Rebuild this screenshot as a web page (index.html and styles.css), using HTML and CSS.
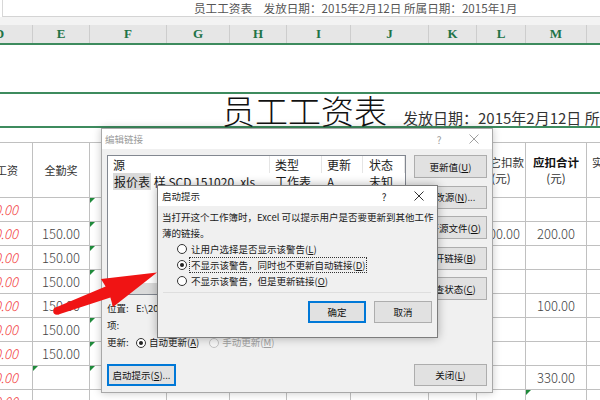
FILE: index.html
```html
<!DOCTYPE html>
<html lang="zh-CN">
<head>
    <meta charset="UTF-8">
    <title>员工工资表 - 编辑链接</title>
    <link rel="stylesheet" href="styles.css">
</head>
<body>
    <div class="topbar">员工工资表　发放日期：2015年2月12日 所属日期：2015年1月</div>
    <div class="band"></div>

    <div class="colheads">
        <div class="ch c-d">D</div><div class="ch c-e">E</div><div class="ch c-f">F</div><div class="ch c-g">G</div><div class="ch c-h">H</div><div class="ch c-i">I</div><div class="ch c-j">J</div><div class="ch c-k">K</div><div class="ch c-l">L</div><div class="ch c-m">M</div><div class="ch c-n">N</div>
    </div>

    <div class="blank-row"></div>
    <div class="title-row"><span class="big">员工工资表</span><span class="sub">发放日期：2015年2月12日 所属日期：2015年1月</span></div>
    <div class="spacer-row"></div>

    <!-- header row -->
    <div class="row head">
        <div class="cell c-d right hd">应发工资</div>
        <div class="cell c-e hd">全勤奖</div>
        <div class="cell c-f"></div><div class="cell c-g"></div><div class="cell c-h"></div><div class="cell c-i"></div><div class="cell c-j"></div><div class="cell c-k"></div>
        <div class="cell c-l hd two"><span class="stack">其它扣款<br>(元)</span></div>
        <div class="cell c-m hd two"><span class="stack"><b>应扣合计</b><br>(元)</span></div>
        <div class="cell c-n hd two left"><span class="stack">实发合计<br>(元)</span></div>
    </div>

    <!-- data rows -->
    <div class="row">
        <div class="cell c-d right red">3000.00</div><div class="cell c-e"></div><div class="cell c-f flag"></div><div class="cell c-g"></div><div class="cell c-h"></div><div class="cell c-i"></div><div class="cell c-j"></div><div class="cell c-k"></div><div class="cell c-l"></div><div class="cell c-m"></div><div class="cell c-n"></div>
    </div>
    <div class="row">
        <div class="cell c-d right red">3000.00</div><div class="cell c-e num">150.00</div><div class="cell c-f flag"></div><div class="cell c-g"></div><div class="cell c-h"></div><div class="cell c-i"></div><div class="cell c-j"></div><div class="cell c-k"></div><div class="cell c-l num">100.00</div><div class="cell c-m num">200.00</div><div class="cell c-n"></div>
    </div>
    <div class="row">
        <div class="cell c-d right red">3000.00</div><div class="cell c-e num">150.00</div><div class="cell c-f flag"></div><div class="cell c-g"></div><div class="cell c-h"></div><div class="cell c-i"></div><div class="cell c-j"></div><div class="cell c-k"></div><div class="cell c-l"></div><div class="cell c-m"></div><div class="cell c-n"></div>
    </div>
    <div class="row">
        <div class="cell c-d right red">3000.00</div><div class="cell c-e num">150.00</div><div class="cell c-f flag"></div><div class="cell c-g"></div><div class="cell c-h"></div><div class="cell c-i"></div><div class="cell c-j"></div><div class="cell c-k"></div><div class="cell c-l"></div><div class="cell c-m"></div><div class="cell c-n"></div>
    </div>
    <div class="row">
        <div class="cell c-d right red">3000.00</div><div class="cell c-e num">150.00</div><div class="cell c-f flag"></div><div class="cell c-g"></div><div class="cell c-h"></div><div class="cell c-i"></div><div class="cell c-j"></div><div class="cell c-k"></div><div class="cell c-l"></div><div class="cell c-m num">100.00</div><div class="cell c-n"></div>
    </div>
    <div class="row">
        <div class="cell c-d right red">3000.00</div><div class="cell c-e num">150.00</div><div class="cell c-f flag"></div><div class="cell c-g"></div><div class="cell c-h"></div><div class="cell c-i"></div><div class="cell c-j"></div><div class="cell c-k"></div><div class="cell c-l"></div><div class="cell c-m"></div><div class="cell c-n"></div>
    </div>
    <div class="row">
        <div class="cell c-d right red">3000.00</div><div class="cell c-e num">150.00</div><div class="cell c-f flag"></div><div class="cell c-g"></div><div class="cell c-h"></div><div class="cell c-i"></div><div class="cell c-j"></div><div class="cell c-k"></div><div class="cell c-l"></div><div class="cell c-m"></div><div class="cell c-n"></div>
    </div>
    <div class="row">
        <div class="cell c-d right red">3000.00</div><div class="cell c-e flag"></div><div class="cell c-f flag"></div><div class="cell c-g"></div><div class="cell c-h"></div><div class="cell c-i"></div><div class="cell c-j"></div><div class="cell c-k"></div><div class="cell c-l"></div><div class="cell c-m num">330.00</div><div class="cell c-n"></div>
    </div>
    <div class="row">
        <div class="cell c-d right red">3000.00</div><div class="cell c-e"></div><div class="cell c-f"></div><div class="cell c-g"></div><div class="cell c-h"></div><div class="cell c-i"></div><div class="cell c-j"></div><div class="cell c-k"></div><div class="cell c-l"></div><div class="cell c-m flag"></div><div class="cell c-n"></div>
    </div>

    <!-- 编辑链接 dialog (inactive) -->
    <div class="dialog links">
        <div class="titlebar inactive">
            <span class="ttl">编辑链接</span>
            <span class="tb-help">?</span>
            <span class="tb-close"><svg width="10" height="10" viewBox="0 0 10 10"><path d="M0.5 0.5L9.5 9.5M9.5 0.5L0.5 9.5" stroke="#a0a0a0" stroke-width="1"/></svg></span>
        </div>
        <div class="links-body">
            <div class="links-main">
                <div class="listbox">
                    <div class="lb-head">
                        <span class="lc1">源</span><span class="lc2">类型</span><span class="lc3">更新</span><span class="lc4">状态</span>
                    </div>
                    <div class="lb-row">
                        <span class="lc1"><span class="sel">报价表</span> 样 SCD 151020 .xls</span><span class="lc2">工作表</span><span class="lc3">A</span><span class="lc4">未知</span>
                    </div>
                    <div class="hscroll"></div>
                </div>
                <div class="info">
                    <div><span class="lbl">位置:</span>E:\2015年\报价表</div>
                    <div><span class="lbl">项:</span></div>
                    <div class="upd">
                        <span class="lbl">更新:</span>
                        <span class="radio on"></span><span class="rlbl">自动更新(<u>A</u>)</span>
                        <span class="radio off"></span><span class="rlbl dim">手动更新(<u>M</u>)</span>
                    </div>
                </div>
                <button class="btn start default">启动提示(<u>S</u>)...</button>
            </div>
            <div class="links-side">
                <button class="btn">更新值(<u>U</u>)</button>
                <button class="btn">更改源(<u>N</u>)...</button>
                <button class="btn">打开源文件(<u>O</u>)</button>
                <button class="btn">断开链接(<u>B</u>)</button>
                <button class="btn">检查状态(<u>C</u>)</button>
                <button class="btn close-btn">关闭(<u>L</u>)</button>
            </div>
        </div>
    </div>

    <!-- 启动提示 dialog (active) -->
    <div class="dialog prompt">
        <div class="titlebar">
            <span class="ttl">启动提示</span>
            <span class="tb-help">?</span>
            <span class="tb-close"><svg width="10" height="10" viewBox="0 0 10 10"><path d="M0.5 0.5L9.5 9.5M9.5 0.5L0.5 9.5" stroke="#333" stroke-width="1"/></svg></span>
        </div>
        <div class="prompt-body">
            <p class="msg">当打开这个工作簿时，Excel 可以提示用户是否要更新到其他工作<br>薄的链接。</p>
            <div class="options">
                <div class="opt"><span class="radio"></span><span class="rlbl">让用户选择是否显示该警告(<u>L</u>)</span></div>
                <div class="opt"><span class="radio on"></span><span class="rlbl focused">不显示该警告，同时也不更新自动链接(<u>D</u>)</span></div>
                <div class="opt"><span class="radio"></span><span class="rlbl">不显示该警告，但是更新链接(<u>O</u>)</span></div>
            </div>
            <div class="sep"></div>
            <div class="actions">
                <button class="btn default">确定</button>
                <button class="btn">取消</button>
            </div>
        </div>
    </div>

    <!-- red annotation arrow -->
    <svg class="arrow" width="600" height="400" viewBox="0 0 600 400">
        <circle cx="57" cy="311" r="3.8" fill="#f01414"/>
        <polygon points="55.6,307.5 105.6,286.4 101,279 157,272.5 113,307 110.4,297.6 58.4,314.5" fill="#f01414"/>
    </svg>
</body>
</html>
```

FILE: styles.css
```css
body {
    margin: 0;
    width: 600px;
    height: 400px;
    overflow: hidden;
    position: relative;
    background: #fff;
    font-family: "Noto Sans CJK SC", sans-serif;
    color: #222;
}

/* formula bar strip */
.topbar {
    height: 16px;
    margin-left: 2px;
    padding-left: 191px;
    border-left: 1px solid #d8d8d8;
    border-bottom: 1px solid #d4d4d4;
    font-size: 11.6px;
    line-height: 16px;
    color: #555;
    white-space: nowrap;
}
.band {
    height: 8px;
    background: #f3f3f3;
}

/* column letters */
.colheads {
    display: flex;
    margin-left: -33px;
    height: 18px;
    background: #e6e6e6;
    border-bottom: 2px solid #3d8b5e;
}
.ch {
    flex: none;
    box-sizing: border-box;
    border-right: 1px solid #cdcdcd;
    text-align: center;
    font-family: "Liberation Serif", serif;
    font-weight: bold;
    font-size: 13px;
    line-height: 18px;
    color: #217346;
}

.c-d { width: 66px; }
.c-e { width: 57px; }
.c-f { width: 77px; }
.c-g { width: 63px; }
.c-h { width: 57px; }
.c-i { width: 64px; }
.c-j { width: 78px; }
.c-k { width: 48px; }
.c-l { width: 49px; }
.c-m { width: 61px; }
.c-n { width: 80px; }

.blank-row {
    height: 47px;
    border-bottom: 2px solid #3d8b5e;
}
.title-row {
    height: 32px;
    padding-left: 222px;
    border-bottom: 2px solid #3d8b5e;
    white-space: nowrap;
    line-height: 32px;
    color: #111;
}
.title-row .big {
    font-size: 33px;
    font-weight: 300;
}
.title-row .sub {
    margin-left: 16px;
    font-size: 15px;
    color: #333;
}
.spacer-row {
    height: 14px;
    border-bottom: 1px solid #c0c0c0;
}

/* grid */
.row {
    display: flex;
    margin-left: -33px;
    height: 24px;
}
.row.head {
    height: 55px;
}
.cell {
    flex: none;
    position: relative;
    box-sizing: border-box;
    border-right: 1px solid #c0c0c0;
    border-bottom: 1px solid #c0c0c0;
    display: flex;
    align-items: center;
    justify-content: center;
    overflow: hidden;
    white-space: nowrap;
}
.cell.right {
    justify-content: flex-end;
    padding-right: 14px;
}
.cell.left {
    justify-content: flex-start;
    padding-left: 5px;
}
.hd {
    font-size: 11px;
    color: #333;
}
.hd.two {
    font-size: 11.5px;
    line-height: 16px;
}
.stack {
    display: block;
    text-align: center;
}
.hd.two b {
    color: #111;
}
.num {
    font-size: 13px;
    font-weight: 300;
    color: #444;
}
.red {
    font-size: 13px;
    font-weight: 300;
    font-style: italic;
    color: #f23c3c;
    padding-right: 15px;
}
.flag::before {
    content: "";
    position: absolute;
    left: 0;
    top: 0;
    border-top: 5px solid #1f8a3b;
    border-right: 5px solid transparent;
}

/* dialogs */
.dialog {
    position: absolute;
    box-sizing: border-box;
    display: flex;
    flex-direction: column;
    background: #f0f0f0;
    border: 1px solid #a8a8a8;
    box-shadow: 0 0 8px rgba(0,0,0,0.22);
    font-size: 9.5px;
    color: #1a1a1a;
}
.links {
    left: 101px;
    top: 128px;
    width: 392px;
    height: 265px;
}
.prompt {
    left: 157px;
    top: 185px;
    width: 281px;
    height: 153px;
    border-color: #7d7d7d;
    box-shadow: 0 0 9px rgba(0,0,0,0.3);
}
.titlebar {
    flex: none;
    display: flex;
    align-items: center;
    height: 20px;
    background: #fff;
    font-size: 9.5px;
}
.titlebar .ttl {
    flex: 1;
    padding-left: 4px;
}
.titlebar.inactive {
    color: #9a9a9a;
}
.links .titlebar .ttl {
    padding-left: 3px;
}
.tb-help {
    width: 34px;
    text-align: center;
    font-size: 10px;
}
.tb-close {
    width: 36px;
    display: flex;
    justify-content: center;
}

.links-body {
    flex: 1;
    display: flex;
    gap: 8px;
    padding: 6px 5px 6px 5px;
}
.links-main {
    width: 299px;
    display: flex;
    flex-direction: column;
}
.links-side {
    width: 73px;
    display: flex;
    flex-direction: column;
}
.links-side .btn {
    margin-bottom: 7.5px;
}
.links-side .close-btn {
    margin-top: auto;
    margin-bottom: 0;
    height: 22px;
}

.listbox {
    height: 140px;
    box-sizing: border-box;
    position: relative;
    background: #fff;
    border: 1px solid #828790;
    font-size: 12px;
    white-space: nowrap;
    overflow: hidden;
}
.lb-head, .lb-row {
    display: flex;
    height: 17px;
    line-height: 17px;
}
.lb-head span {
    border-right: 1px solid #e5e5e5;
}
.lc1 { width: 162px; box-sizing: border-box; padding-left: 5px; flex: none; overflow: hidden; }
.lc2 { width: 52px; box-sizing: border-box; padding-left: 5px; flex: none; }
.lc3 { width: 41px; box-sizing: border-box; padding-left: 5px; flex: none; }
.lc4 { flex: 1; padding-left: 6px; }
.lb-row .sel {
    background: #d9d9d9;
    padding: 0 1px;
}
.hscroll {
    position: absolute;
    left: 0;
    right: 0;
    bottom: 0;
    height: 11px;
    background: #dadada;
}

.info {
    margin-top: 5px;
    line-height: 17px;
}
.info .lbl {
    display: inline-block;
    width: 29px;
}
.upd {
    display: flex;
    align-items: center;
}
.upd .rlbl {
    margin-left: 3px;
    margin-right: 10px;
}
.dim {
    color: #a0a0a0;
}

.btn {
    box-sizing: border-box;
    height: 23px;
    padding: 0;
    background: #e1e1e1;
    border: 1px solid #adadad;
    font-family: inherit;
    font-size: 9.5px;
    color: #111;
    white-space: nowrap;
    overflow: hidden;
}
.btn.default {
    border-color: #0078d7;
    box-shadow: inset 0 0 0 1px #0078d7;
}
.start {
    margin-top: auto;
    width: 69px;
    height: 22px;
}

.radio {
    display: inline-block;
    flex: none;
    position: relative;
    width: 10px;
    height: 10px;
    box-sizing: border-box;
    border: 1px solid #333;
    border-radius: 50%;
    background: #fff;
}
.radio.on::after {
    content: "";
    position: absolute;
    left: 2px;
    top: 2px;
    width: 4px;
    height: 4px;
    border-radius: 50%;
    background: #222;
}
.radio.off {
    border-color: #c2c2c2;
    background: #f6f6f6;
}

.prompt-body {
    flex: 1;
    padding: 3px 5px 0 4px;
}
.msg {
    margin: 0;
    line-height: 16px;
    white-space: nowrap;
}
.options {
    margin-left: 15px;
}
.opt {
    display: flex;
    align-items: center;
    height: 16px;
}
.opt .rlbl {
    margin-left: 3px;
    line-height: 14px;
    padding: 0 1px;
}
.focused {
    outline: 1px dotted #333;
}
.sep {
    height: 1px;
    margin: 3px 1px 0 1px;
    background: #dedede;
}
.actions {
    display: flex;
    justify-content: flex-end;
    gap: 8px;
    margin-top: 8px;
}
.actions .btn {
    width: 58px;
    height: 22px;
}

.arrow {
    position: absolute;
    left: 0;
    top: 0;
    pointer-events: none;
}
```
